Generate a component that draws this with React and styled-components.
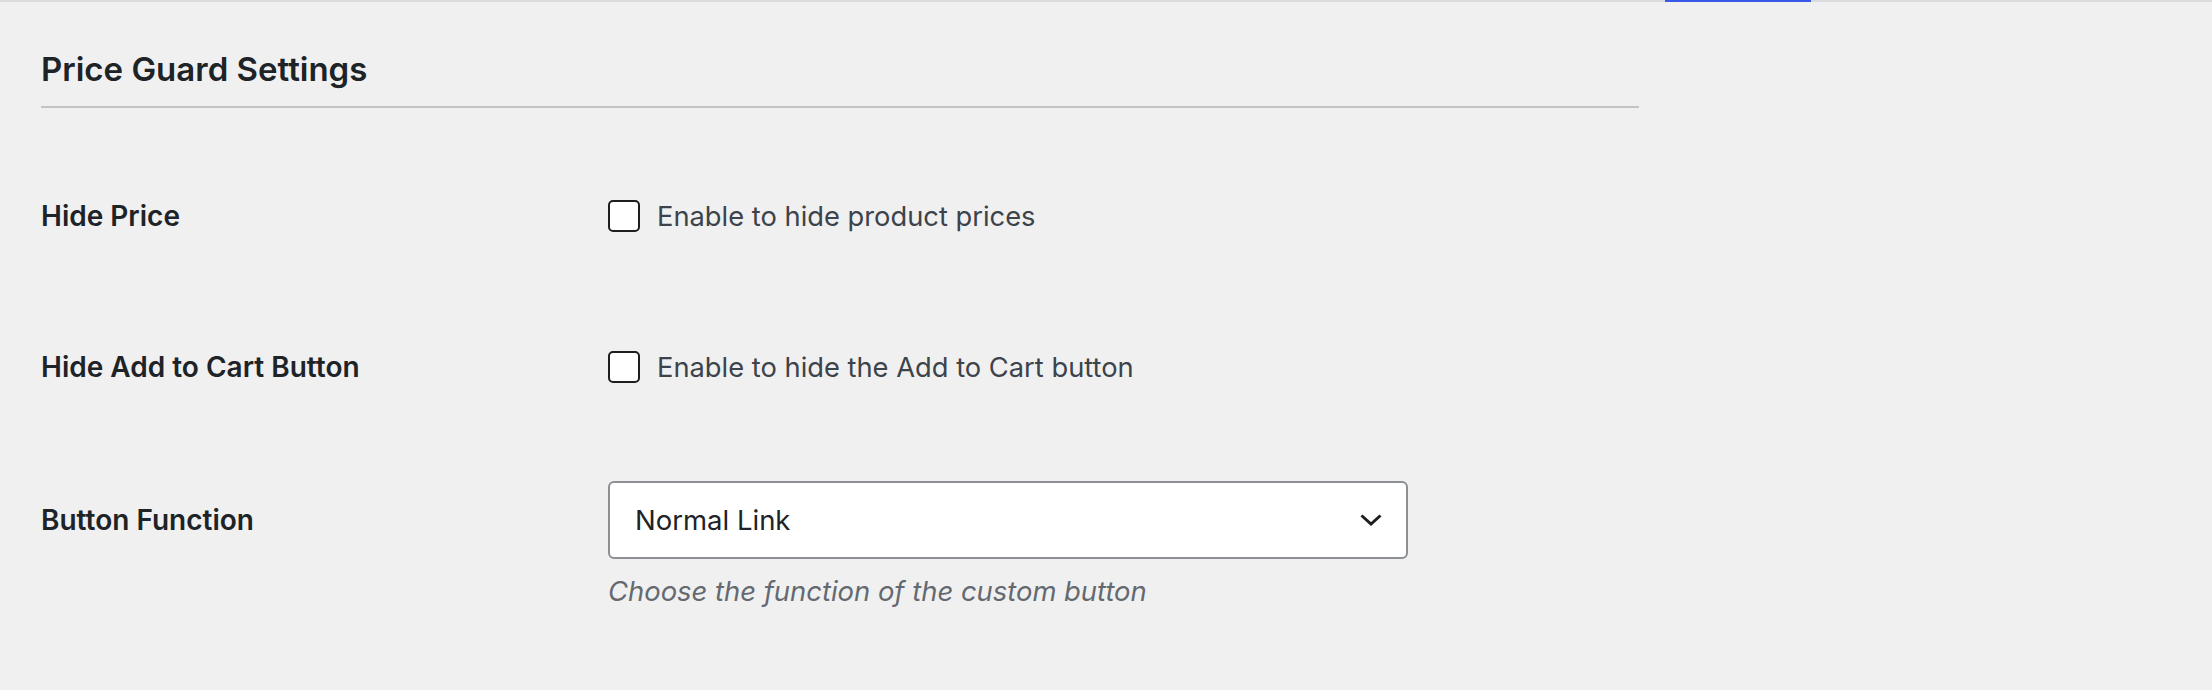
import React from 'react';
import styled, { createGlobalStyle } from 'styled-components';

const GlobalStyle = createGlobalStyle`
  html, body {
    margin: 0;
    padding: 0;
    background: #f0f0f1;
  }
  body {
    font-family: Inter, "Noto Sans", "Liberation Sans", sans-serif;
    color: #3c434a;
  }
`;

const TopStrip = styled.div`
  height: 2px;
  background: #dcdcde;
  display: flex;
`;

const TabIndicator = styled.div`
  margin-left: 1665px;
  width: 146px;
  height: 2px;
  background: #3858e9;
`;

const Wrap = styled.div`
  padding-left: 41px;
  width: 1598px;
`;

const Heading = styled.h2`
  margin: 45px 0 0;
  padding-bottom: 15px;
  border-bottom: 2px solid #c3c4c7;
  font-size: 33px;
  line-height: 44px;
  font-weight: 600;
  color: #1d2327;
`;

const Form = styled.div`
  margin-top: 69px;
  display: flex;
  flex-direction: column;
`;

const Row = styled.div`
  display: grid;
  grid-template-columns: 567px 1fr;
  align-items: start;
  min-height: ${(p) => p.$height || 151}px;
`;

const Label = styled.div`
  display: flex;
  align-items: center;
  height: 78px;
  font-size: 28px;
  font-weight: 600;
  color: #1d2327;
`;

const Field = styled.div`
  display: flex;
  flex-direction: column;
`;

const CheckLine = styled.label`
  display: flex;
  align-items: center;
  gap: 17px;
  height: 78px;
  font-size: 27.3px;
  color: #3c434a;
`;

const Box = styled.span`
  width: 28px;
  height: 28px;
  border: 2px solid #1e1e1e;
  border-radius: 5px;
  background: #fff;
  flex-shrink: 0;
`;

const SelectBox = styled.div`
  box-sizing: border-box;
  width: 800px;
  height: 78px;
  border: 2px solid #8c8f94;
  border-radius: 6px;
  background: #fff;
  display: flex;
  align-items: center;
  justify-content: space-between;
  padding: 0 24px 0 25px;
  font-size: 27.5px;
  color: #1d2327;
`;

const Description = styled.p`
  margin: 12px 0 0;
  font-size: 27.4px;
  line-height: 40px;
  font-style: italic;
  color: #646970;
`;

const Chevron = () => (
  <svg width="22" height="12" viewBox="0 0 22 12" fill="none">
    <path d="M1.5 1.5 L11 10 L20.5 1.5" stroke="#1e1e1e" strokeWidth="3" />
  </svg>
);

const Checkbox = ({ text }) => (
  <CheckLine>
    <Box />
    {text}
  </CheckLine>
);

export default function App() {
  return (
    <>
      <GlobalStyle />
      <TopStrip>
        <TabIndicator />
      </TopStrip>
      <Wrap>
        <Heading>Price Guard Settings</Heading>
        <Form>
          <Row>
            <Label>Hide Price</Label>
            <Field>
              <Checkbox text="Enable to hide product prices" />
            </Field>
          </Row>
          <Row $height={153}>
            <Label>Hide Add to Cart Button</Label>
            <Field>
              <Checkbox text="Enable to hide the Add to Cart button" />
            </Field>
          </Row>
          <Row>
            <Label>Button Function</Label>
            <Field>
              <SelectBox>
                <span>Normal Link</span>
                <Chevron />
              </SelectBox>
              <Description>Choose the function of the custom button</Description>
            </Field>
          </Row>
        </Form>
      </Wrap>
    </>
  );
}
